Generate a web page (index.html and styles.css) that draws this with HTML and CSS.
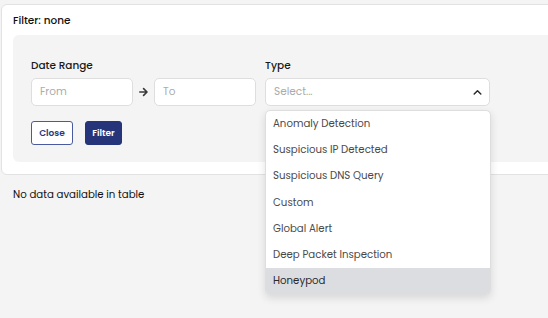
FILE: index.html
```html
<!DOCTYPE html>
<html>
<head>
<meta charset="utf-8">
<link rel="stylesheet" href="styles.css">
</head>
<body>
<div class="page">
  <div class="card">
    <div class="card-title">Filter: none</div>
    <div class="panel">
      <div class="fields">
        <div class="field">
          <div class="label">Date Range</div>
          <div class="range">
            <div class="input date">From</div>
            <svg class="arrow" width="9" height="10" viewBox="0 0 9 10"><path d="M0.8 5h7M4.6 1.6 8 5 4.6 8.4" fill="none" stroke="#3a3a3a" stroke-width="1.6" stroke-linecap="round" stroke-linejoin="round"/></svg>
            <div class="input date">To</div>
          </div>
        </div>
        <div class="field type-field">
          <div class="label">Type</div>
          <div class="input select">
            <span>Select...</span>
            <svg class="chev" width="9" height="7" viewBox="0 0 9 7"><path d="M1.2 5 4.5 1.8 7.8 5" fill="none" stroke="#2a2a2a" stroke-width="1.5" stroke-linecap="round" stroke-linejoin="round"/></svg>
          </div>
          <ul class="menu">
            <li>Anomaly Detection</li>
            <li>Suspicious IP Detected</li>
            <li>Suspicious DNS Query</li>
            <li>Custom</li>
            <li>Global Alert</li>
            <li>Deep Packet Inspection</li>
            <li class="active">Honeypod</li>
          </ul>
        </div>
      </div>
      <div class="buttons">
        <button class="btn btn-outline">Close</button>
        <button class="btn btn-primary">Filter</button>
      </div>
    </div>
  </div>
  <div class="empty">No data available in table</div>
</div>
</body>
</html>
```
FILE: styles.css
```css
* { box-sizing: border-box; }
html, body { margin: 0; padding: 0; }
body {
  background: #f4f4f4;
  font-family: "Poppins", "DejaVu Sans", sans-serif;
  color: #1e1e1e;
  width: 548px;
  height: 318px;
  overflow: hidden;
}
.page { padding: 4px 0 0 1px; width: 600px; }
.card {
  background: #fff;
  border: 1px solid #e2e2e2;
  border-radius: 6px;
  height: 171px;
  padding: 9px 0 0 11px;
}
.card-title {
  font-size: 10.5px;
  font-weight: 500;
  line-height: 14px;
  color: #111;
}
.panel {
  margin-top: 7px;
  background: #f4f4f4;
  border-radius: 6px;
  height: 127px;
  padding: 24px 0 0 18px;
}
.fields { display: flex; gap: 9px; }
.field { display: flex; flex-direction: column; }
.type-field { position: relative; }
.label {
  font-size: 10.5px;
  font-weight: 500;
  line-height: 14px;
  height: 14px;
  margin-bottom: 5px;
  color: #1a1a1a;
}
.range { display: flex; align-items: center; }
.arrow { margin: 0 6px; }
.input {
  height: 28px;
  background: #fff;
  border: 1px solid #dedede;
  border-radius: 5px;
  font-size: 10.5px;
  color: #ababab;
  display: flex;
  align-items: center;
  padding: 0 8px;
}
.date { width: 102px; }
.select { width: 225px; justify-content: space-between; padding-right: 7px; }
.menu {
  position: absolute;
  left: 0;
  top: 51px;
  width: 226px;
  margin: 0;
  padding: 0;
  list-style: none;
  background: #fff;
  border: 1px solid #dedede;
  border-radius: 5px;
  box-shadow: 0 3px 8px rgba(0,0,0,0.12);
  overflow: hidden;
  z-index: 5;
}
.menu li {
  height: 26.2px;
  line-height: 26.2px;
  padding-left: 7px;
  font-size: 10.2px;
  color: #4a4a4a;
}
.menu li.active { background: #dcdde0; color: #2a2a2a; }
.buttons { display: flex; gap: 12px; margin-top: 15px; }
.btn {
  font-family: inherit;
  font-size: 9px;
  font-weight: 600;
  border-radius: 3px;
  height: 24px;
  padding: 0;
  cursor: pointer;
}
.btn-outline {
  width: 42px;
  background: #fff;
  color: #2a3a80;
  border: 1px solid #4a5a9e;
}
.btn-primary {
  width: 37px;
  background: #26357a;
  color: #fff;
  border: 1px solid #26357a;
}
.empty {
  font-size: 10.2px;
  line-height: 14px;
  margin: 13px 0 0 12px;
  color: #111;
}
```
